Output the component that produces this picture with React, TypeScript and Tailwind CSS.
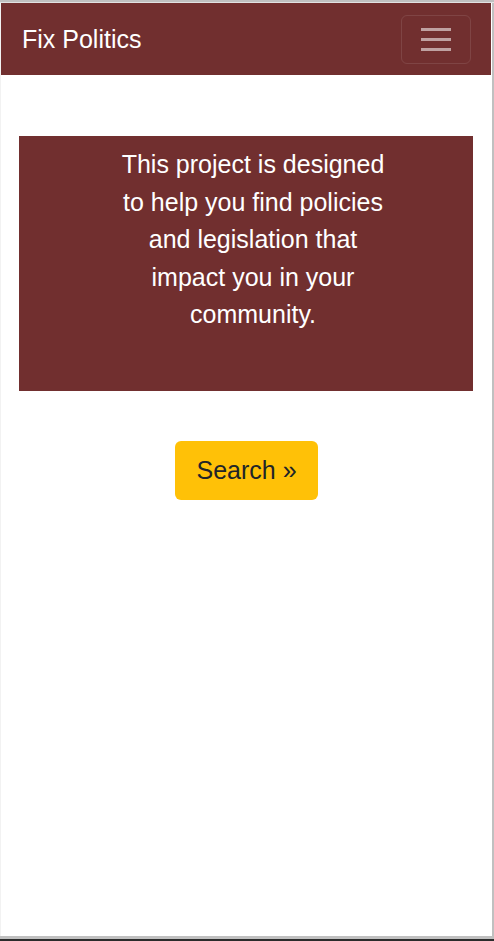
import React from "react";

export default function App() {
  return (
    <div
      className="w-[494px] h-[941px] flex flex-col overflow-hidden bg-white"
      style={{ fontFamily: '"Liberation Sans", Arial, sans-serif' }}
    >
      <div className="h-[2px] bg-[#c0c0c0] shrink-0" />
      <div className="h-[1px] bg-[#e2e2e2] shrink-0" />
      <div className="flex flex-1 min-h-0">
        <div className="w-[1px] bg-[#f2f2f2] shrink-0" />
        <div className="flex-1 flex flex-col bg-white min-w-0">
          <nav className="h-[72px] bg-[#712f2f] flex items-center justify-between pl-[21px] pr-[20px] mr-[1px]">
            <span className="text-white text-[25px] leading-[36px]">Fix Politics</span>
            <button className="w-[70px] h-[49px] rounded-[6px] border border-[rgba(255,255,255,0.1)] flex flex-col items-center justify-center gap-[7px]">
              <span className="block w-[30px] h-[3px] bg-[rgba(255,255,255,0.55)]" />
              <span className="block w-[30px] h-[3px] bg-[rgba(255,255,255,0.55)]" />
              <span className="block w-[30px] h-[3px] bg-[rgba(255,255,255,0.55)]" />
            </button>
          </nav>
          <div className="mt-[61px] ml-[18px] mr-[19px] bg-[#712f2f] h-[255px] pt-[10px] pl-[14px] flex justify-center">
            <p className="w-[280px] text-center text-white text-[25px] leading-[37.5px]">
              This project is designed to help you find policies and legislation that impact you in your community.
            </p>
          </div>
          <div className="flex justify-center mt-[50px]">
            <button className="h-[59px] px-[21px] bg-[#ffc107] rounded-[6px] text-[#212529] text-[25px] leading-[37.5px]">
              Search »
            </button>
          </div>
        </div>
        <div className="w-[2px] bg-[#c0c0c0] shrink-0" />
      </div>
      <div className="h-[3px] bg-[#c0c0c0] shrink-0" />
      <div className="h-[2px] bg-[#2b2b2b] shrink-0" />
    </div>
  );
}
